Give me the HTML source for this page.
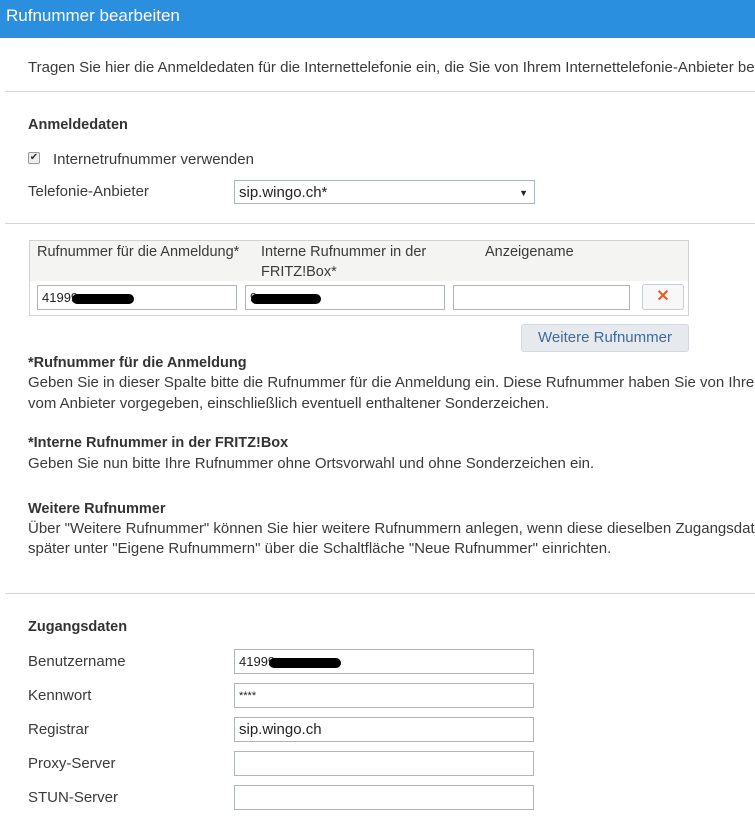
<!DOCTYPE html>
<html><head><meta charset="utf-8"><style>
*{box-sizing:border-box;margin:0;padding:0}
body{width:755px;height:824px;overflow:hidden;background:#fff;font-family:"Liberation Sans",sans-serif;font-size:15px;color:#3a3a3a;position:relative}
.a{position:absolute;white-space:nowrap;line-height:18px}
.hdr{position:absolute;left:0;top:0;width:755px;height:38px;background:#2a8fdf;color:#fff;font-size:17px;padding:6px 6px}
.hr{position:absolute;left:5px;right:0;height:1px;background:#d4d4d4}
.b{font-weight:bold;color:#333;font-size:14.5px}
.in{position:absolute;height:25px;border:1px solid #aab5bd;background:#fff;font-size:15px;padding:3px 4px;line-height:18px;color:#222;overflow:hidden;white-space:nowrap}
.blot{display:inline-block;width:62px;height:10px;background:#000;border-radius:5px;vertical-align:middle;margin-left:-6px}
</style></head><body>
<div class="hdr">Rufnummer bearbeiten</div>
<div class="a" style="left:28px;top:59px">Tragen Sie hier die Anmeldedaten für die Internettelefonie ein, die Sie von Ihrem Internettelefonie-Anbieter be</div>
<div class="hr" style="top:91px"></div>
<div class="a b" style="left:28px;top:116px">Anmeldedaten</div>
<div style="position:absolute;left:28px;top:152px;width:12px;height:12px;border:1px solid #999;border-radius:2px;background:#eee;font-size:10px;line-height:10px;text-align:center;color:#333">✔</div>
<div class="a" style="left:53px;top:151px">Internetrufnummer verwenden</div>
<div class="a" style="left:28px;top:183px">Telefonie-Anbieter</div>
<div class="in" style="left:234px;top:180px;width:301px;height:24px">sip.wingo.ch*<span style="position:absolute;right:6px;top:3px;font-size:9px">▼</span></div>
<div class="hr" style="top:223px"></div>
<div style="position:absolute;left:29px;top:240px;width:660px;height:76px;border:1px solid #d2d2d2;background:#fff"></div>
<div style="position:absolute;left:30px;top:241px;width:658px;height:40px;background:#f4f4f2"></div>
<div class="a" style="left:37px;top:243px;font-size:14.5px">Rufnummer für die Anmeldung*</div>
<div class="a" style="left:261px;top:243px;font-size:14.5px">Interne Rufnummer in der</div>
<div class="a" style="left:261px;top:263px;font-size:14.5px">FRITZ!Box*</div>
<div class="a" style="left:485px;top:243px;font-size:14.5px">Anzeigename</div>
<div class="in" style="left:37px;top:285px;width:200px;font-size:13px">41999<span class="blot"></span></div>
<div class="in" style="left:245px;top:285px;width:200px;font-size:13px">9<span class="blot" style="width:70px"></span></div>
<div class="in" style="left:453px;top:285px;width:177px"></div>
<div style="position:absolute;left:642px;top:284px;width:42px;height:26px;border:1px solid #c8cdd2;border-radius:3px;background:#f8f8f8;color:#f05a28;font-weight:bold;font-size:16px;text-align:center;line-height:24px">✕</div>
<div style="position:absolute;left:521px;top:324px;width:168px;height:28px;border:1px solid #d2d8de;border-radius:3px;background:#e6eaee;color:#3d6a9c;text-align:center;line-height:26px;font-size:15px">Weitere Rufnummer</div>
<div class="a b" style="left:28px;top:354px">*Rufnummer für die Anmeldung</div>
<div class="a" style="left:28px;top:374px">Geben Sie in dieser Spalte bitte die Rufnummer für die Anmeldung ein. Diese Rufnummer haben Sie von Ihrem</div>
<div class="a" style="left:28px;top:395px">vom Anbieter vorgegeben, einschließlich eventuell enthaltener Sonderzeichen.</div>
<div class="a b" style="left:28px;top:434px">*Interne Rufnummer in der FRITZ!Box</div>
<div class="a" style="left:28px;top:455px">Geben Sie nun bitte Ihre Rufnummer ohne Ortsvorwahl und ohne Sonderzeichen ein.</div>
<div class="a b" style="left:28px;top:500px">Weitere Rufnummer</div>
<div class="a" style="left:28px;top:520px">Über "Weitere Rufnummer" können Sie hier weitere Rufnummern anlegen, wenn diese dieselben Zugangsdate</div>
<div class="a" style="left:28px;top:540px">später unter "Eigene Rufnummern" über die Schaltfläche "Neue Rufnummer" einrichten.</div>
<div class="hr" style="top:593px"></div>
<div class="a b" style="left:28px;top:618px">Zugangsdaten</div>
<div class="a" style="left:28px;top:653px">Benutzername</div>
<div class="a" style="left:28px;top:687px">Kennwort</div>
<div class="a" style="left:28px;top:721px">Registrar</div>
<div class="a" style="left:28px;top:755px">Proxy-Server</div>
<div class="a" style="left:28px;top:789px">STUN-Server</div>
<div class="in" style="left:234px;top:649px;width:300px;font-size:13px">41999<span class="blot" style="width:72px"></span></div>
<div class="in" style="left:234px;top:683px;width:300px;font-size:11px">****</div>
<div class="in" style="left:234px;top:717px;width:300px">sip.wingo.ch</div>
<div class="in" style="left:234px;top:751px;width:300px"></div>
<div class="in" style="left:234px;top:785px;width:300px"></div>
</body></html>
